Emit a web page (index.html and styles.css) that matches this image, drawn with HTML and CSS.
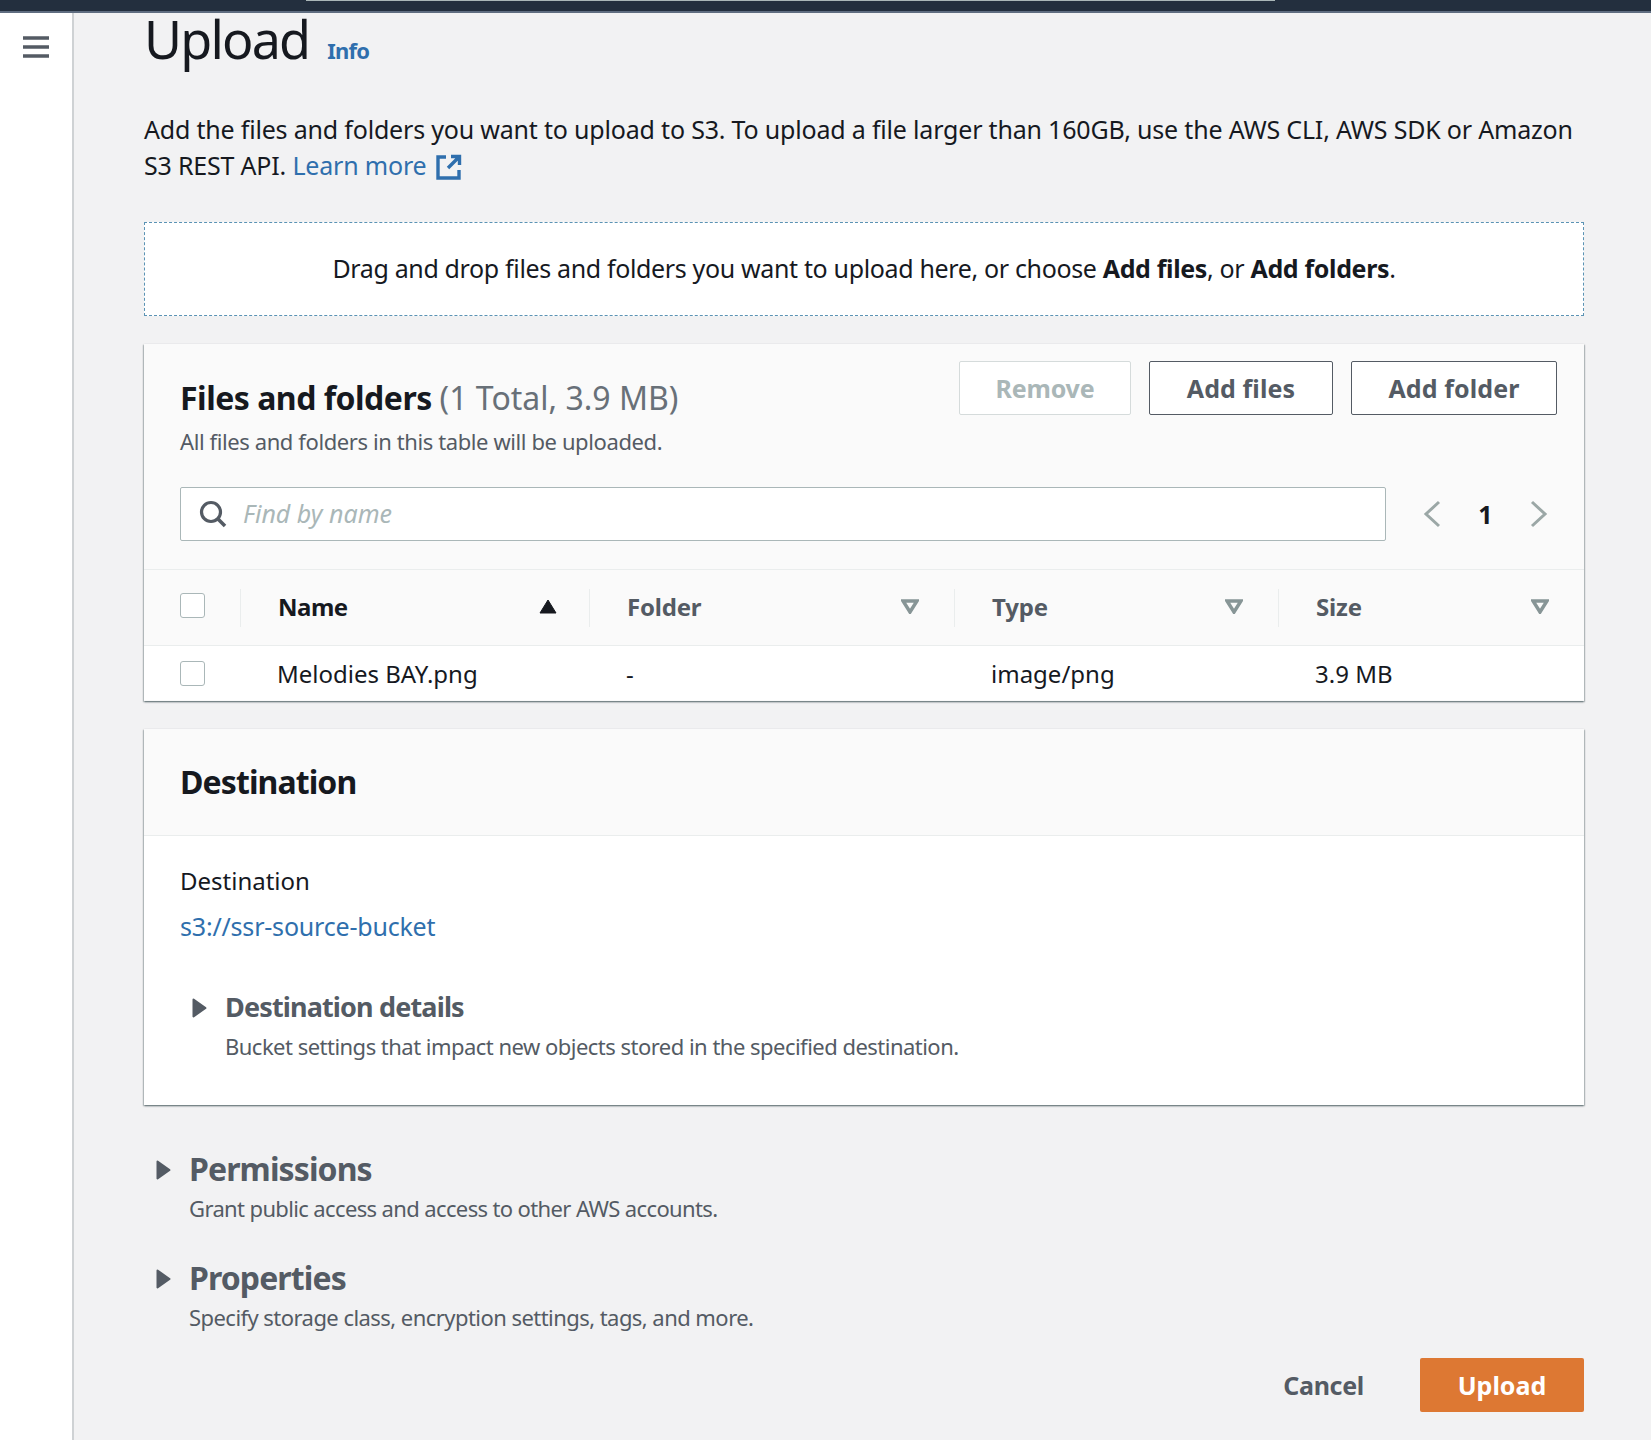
FILE: index.html
```html
<!DOCTYPE html>
<html lang="en">
<head>
    <meta charset="UTF-8">
    <meta name="viewport" content="width=device-width, initial-scale=1.0">
    <title>Upload</title>
    <link rel="stylesheet" href="styles.css">
</head>
<body>
    <header class="topbar"><div class="topbar-search"></div></header>
    <div class="shell">
        <nav class="sidenav">
            <svg class="menu-icon" width="26" height="22" viewBox="0 0 26 22"><path d="M0 2h26M0 11h26M0 20h26" stroke="#545b64" stroke-width="3.4" fill="none"/></svg>
        </nav>
        <main class="content">
            <div class="title-row">
                <h1>Upload</h1>
                <a class="info-link" href="#">Info</a>
            </div>
            <p class="intro">Add the files and folders you want to upload to S3. To upload a file larger than 160GB, use the AWS CLI, AWS SDK or Amazon S3 REST API. <a href="#">Learn more</a>
                <svg class="external" width="26" height="26" viewBox="0 0 26 26"><path d="M10 3H2v21h21v-8M15 2.500h8.500V11M23 3L12 14" stroke="#2f6fad" stroke-width="3.4" fill="none"/></svg>
            </p>
            <div class="dropzone"><span>Drag and drop files and folders you want to upload here, or choose <b>Add files</b>, or <b>Add folders</b>.</span></div>

            <section class="card files-card">
                <div class="files-head">
                    <div>
                        <h2>Files and folders <span class="count">(1 Total, 3.9 MB)</span></h2>
                        <p class="files-desc">All files and folders in this table will be uploaded.</p>
                    </div>
                    <div class="button-group">
                        <button class="btn btn-remove" type="button">Remove</button>
                        <button class="btn btn-files" type="button">Add files</button>
                        <button class="btn btn-folder" type="button">Add folder</button>
                    </div>
                </div>
                <div class="filter-row">
                    <div class="search-box">
                        <svg width="28" height="28" viewBox="0 0 28 28"><circle cx="12" cy="12" r="9.500" stroke="#545b64" stroke-width="3.200" fill="none"/><path d="M18.500 18.500L26 26" stroke="#545b64" stroke-width="3.600" fill="none"/></svg>
                        <span class="placeholder">Find by name</span>
                    </div>
                    <div class="pager">
                        <svg width="18" height="28" viewBox="0 0 18 28"><path d="M16 2L3 14l13 12" stroke="#9ba7a6" stroke-width="3" fill="none"/></svg>
                        <span class="page-num">1</span>
                        <svg width="18" height="28" viewBox="0 0 18 28"><path d="M2 2l13 12L2 26" stroke="#9ba7a6" stroke-width="3" fill="none"/></svg>
                    </div>
                </div>
                <div class="table-row table-head">
                    <div class="cell check-cell"><span class="checkbox"></span></div>
                    <div class="cell head-cell sorted">Name
                        <svg width="18" height="15" viewBox="0 0 18 15"><path d="M9 1l8 13H1z" fill="#16191f" stroke="#16191f" stroke-linejoin="round"/></svg>
                    </div>
                    <div class="cell head-cell">Folder
                        <svg width="18" height="15" viewBox="0 0 18 15"><path d="M2 2h14l-7 11z" fill="none" stroke="#879596" stroke-width="3.500"/></svg>
                    </div>
                    <div class="cell head-cell">Type
                        <svg width="18" height="15" viewBox="0 0 18 15"><path d="M2 2h14l-7 11z" fill="none" stroke="#879596" stroke-width="3.500"/></svg>
                    </div>
                    <div class="cell head-cell">Size
                        <svg width="18" height="15" viewBox="0 0 18 15"><path d="M2 2h14l-7 11z" fill="none" stroke="#879596" stroke-width="3.500"/></svg>
                    </div>
                </div>
                <div class="table-row table-body">
                    <div class="cell check-cell"><span class="checkbox"></span></div>
                    <div class="cell body-cell">Melodies BAY.png</div>
                    <div class="cell body-cell">-</div>
                    <div class="cell body-cell">image/png</div>
                    <div class="cell body-cell">3.9 MB</div>
                </div>
            </section>

            <section class="card dest-card">
                <div class="dest-head"><h2>Destination</h2></div>
                <div class="dest-body">
                    <div class="dest-label">Destination</div>
                    <a class="dest-link" href="#">s3://ssr-source-bucket</a>
                    <div class="expand inner-expand">
                        <svg class="caret" width="15" height="20" viewBox="0 0 15 20"><path d="M1.500 1.500L13.500 10 1.500 18.500z" fill="#545b64" stroke="#545b64" stroke-width="2" stroke-linejoin="round"/></svg>
                        <div>
                            <h3>Destination details</h3>
                            <p>Bucket settings that impact new objects stored in the specified destination.</p>
                        </div>
                    </div>
                </div>
            </section>

            <div class="expand outer-expand">
                <svg class="caret" width="15" height="20" viewBox="0 0 15 20"><path d="M1.500 1.500L13.500 10 1.500 18.500z" fill="#545b64" stroke="#545b64" stroke-width="2" stroke-linejoin="round"/></svg>
                <div>
                    <h2>Permissions</h2>
                    <p class="grant">Grant public access and access to other AWS accounts.</p>
                </div>
            </div>
            <div class="expand outer-expand">
                <svg class="caret" width="15" height="20" viewBox="0 0 15 20"><path d="M1.500 1.500L13.500 10 1.500 18.500z" fill="#545b64" stroke="#545b64" stroke-width="2" stroke-linejoin="round"/></svg>
                <div>
                    <h2>Properties</h2>
                    <p>Specify storage class, encryption settings, tags, and more.</p>
                </div>
            </div>

            <div class="actions">
                <a class="cancel" href="#">Cancel</a>
                <button class="btn-upload" type="button">Upload</button>
            </div>
        </main>
    </div>
</body>
</html>
```

FILE: styles.css
```css
* {
    box-sizing: border-box;
}
body {
    margin: 0;
    height: 1440px;
    overflow: hidden;
    font-family: 'Noto Sans', sans-serif;
    font-size: 24px;
    color: #16191f;
    background: #f2f2f3;
}
h1, h2, h3, p {
    margin: 0;
}
a {
    color: #2f6fad;
    text-decoration: none;
}
.topbar {
    height: 13px;
    background: #232f3e;
    border-bottom: 2px solid #5f6d80;
    padding-left: 306px;
}
.topbar-search {
    width: 969px;
    height: 1px;
    background: #aab7b8;
}
.shell {
    display: flex;
    height: 1427px;
}
.sidenav {
    width: 74px;
    background: #fff;
    border-right: 2px solid #cfd2d4;
    padding: 23px 0 0 23px;
}
.menu-icon {
    display: block;
}
.content {
    width: 1511px;
    padding-left: 70px;
}
.title-row {
    display: flex;
    align-items: baseline;
    gap: 18px;
    height: 67px;
}
h1 {
    font-size: 52px;
    font-weight: 400;
    line-height: 52px;
    letter-spacing: -1.8px;
}
.info-link {
    font-size: 22px;
    font-weight: 700;
    letter-spacing: -0.8px;
}
.intro {
    margin-top: 31px;
    font-size: 25px;
    line-height: 36px;
    letter-spacing: -0.19px;
    width: 1445px;
}
.external {
    vertical-align: -5px;
    margin-left: 3px;
}
.dropzone {
    margin-top: 39px;
    width: 1440px;
    height: 94px;
    padding-bottom: 2px;
    background: #fff;
    border: 1px dashed #5b93b4;
    display: flex;
    align-items: center;
    justify-content: center;
    font-size: 25px;
    letter-spacing: -0.35px;
}
.card {
    width: 1440px;
    background: #fff;
    box-shadow: 0 1px 2px 0 rgba(0, 28, 36, 0.45), 1px 1px 1px 0 rgba(0, 28, 36, 0.15), -1px 1px 1px 0 rgba(0, 28, 36, 0.15);
}
.files-card {
    margin-top: 28px;
    height: 357px;
    background: #fafafa;
}
.files-head {
    display: flex;
    justify-content: space-between;
    padding: 17px 27px 0 36px;
    height: 143px;
}
.files-head h2 {
    padding-top: 17px;
    letter-spacing: -0.5px;
}
h2 {
    font-size: 32px;
    font-weight: 700;
    line-height: 40px;
    letter-spacing: -0.9px;
}
.count {
    font-weight: 400;
    letter-spacing: 0;
    color: #687078;
}
.files-desc {
    margin-top: 8px;
    font-size: 22px;
    line-height: 30px;
    letter-spacing: -0.4px;
    color: #545b64;
}
.button-group {
    display: flex;
    gap: 18px;
    align-items: flex-start;
}
.btn {
    height: 54px;
    background: #fff;
    border: 1px solid #545b64;
    border-radius: 2px;
    font-family: inherit;
    font-size: 25px;
    font-weight: 700;
    letter-spacing: 0.1px;
    color: #545b64;
}
.btn-remove {
    width: 172px;
    border-color: #d5dbdb;
    color: #aab7b8;
    letter-spacing: -0.2px;
}
.btn-files {
    width: 184px;
}
.btn-folder {
    width: 206px;
}
.filter-row {
    display: flex;
    align-items: flex-start;
    height: 83px;
    padding-left: 36px;
    border-bottom: 1px solid #eaeded;
}
.search-box {
    width: 1206px;
    height: 54px;
    background: #fff;
    border: 1px solid #aab7b8;
    border-radius: 2px;
    display: flex;
    align-items: center;
    gap: 16px;
    padding-left: 18px;
}
.placeholder {
    font-size: 25px;
    font-style: italic;
    color: #aab7b8;
    padding-bottom: 2px;
}
.pager {
    display: flex;
    align-items: center;
    height: 54px;
    margin-left: 37px;
    width: 125px;
    justify-content: space-between;
}
.page-num {
    font-weight: 700;
    font-size: 25px;
}
.table-row {
    display: grid;
    grid-template-columns: 96px 349px 365px 324px 306px;
}
.table-head {
    height: 76px;
    border-bottom: 1px solid #eaeded;
}
.table-body {
    height: 54px;
    background: #fff;
    font-size: 24px;
}
.cell {
    display: flex;
    align-items: center;
}
.check-cell {
    padding-left: 36px;
}
.table-head .check-cell {
    padding-bottom: 4px;
}
.checkbox {
    width: 25px;
    height: 25px;
    background: #fff;
    border: 1.5px solid #aab7b8;
    border-radius: 3px;
}
.head-cell {
    position: relative;
    justify-content: space-between;
    padding: 0 35px 2px 38px;
    font-weight: 700;
    letter-spacing: -0.2px;
    color: #545b64;
}
.head-cell::before {
    content: "";
    position: absolute;
    left: 0;
    top: 19px;
    height: 38px;
    border-left: 1px solid #eaeded;
}
.sorted {
    padding-right: 32px;
    letter-spacing: -0.5px;
    color: #16191f;
}
.body-cell {
    padding-left: 37px;
}
.dest-card {
    margin-top: 28px;
    height: 376px;
}
.dest-head {
    height: 107px;
    background: #fafafa;
    border-bottom: 1px solid #eaeded;
    padding: 33px 0 0 36px;
}
.dest-body {
    padding: 27px 36px 0;
}
.dest-label {
    line-height: 36px;
}
.dest-link {
    display: block;
    margin-top: 9px;
    font-size: 25px;
    line-height: 36px;
    letter-spacing: -0.2px;
}
.expand {
    display: flex;
    align-items: flex-start;
}
.expand p {
    font-size: 22px;
    line-height: 30px;
    letter-spacing: -0.52px;
    color: #545b64;
}
.caret {
    flex: none;
    margin-top: 11px;
}
.inner-expand {
    margin-top: 43px;
    padding-left: 12px;
    gap: 18px;
}
h3 {
    font-size: 27px;
    font-weight: 700;
    line-height: 40px;
    color: #545b64;
    letter-spacing: -0.85px;
}
.inner-expand p {
    margin-top: 4px;
}
.outer-expand {
    padding-left: 12px;
    gap: 18px;
    color: #545b64;
    height: 109px;
}
.outer-expand p {
    margin-top: 4px;
    letter-spacing: -0.55px;
}
.outer-expand .grant {
    letter-spacing: -0.63px;
}
.dest-card + .outer-expand {
    margin-top: 44px;
}
.actions {
    display: flex;
    justify-content: flex-end;
    align-items: center;
    width: 1440px;
    gap: 56px;
    margin-top: -9px;
}
.cancel {
    font-size: 25px;
    font-weight: 700;
    letter-spacing: -0.3px;
    color: #545b64;
}
.btn-upload {
    width: 164px;
    height: 54px;
    border: none;
    border-radius: 2px;
    background: #dd7833;
    color: #fff;
    font-family: inherit;
    font-size: 25px;
    font-weight: 700;
}
```
